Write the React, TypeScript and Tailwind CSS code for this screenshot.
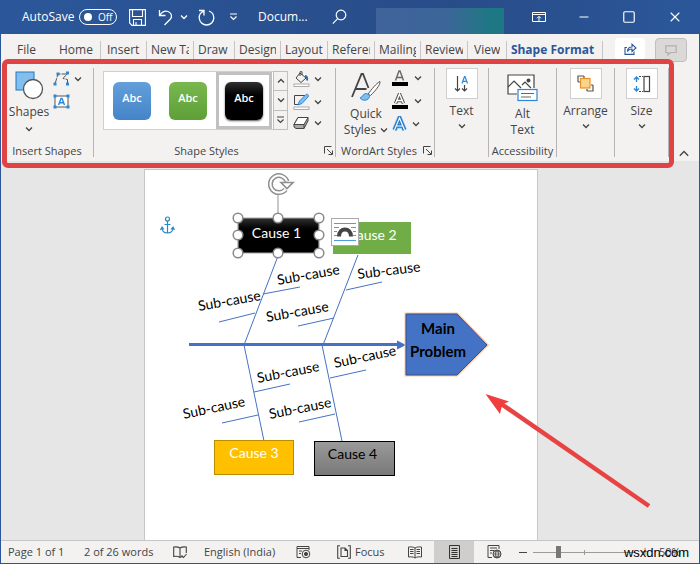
import type { ReactNode } from 'react'
import { Minus, Square, X } from 'lucide-react'

const tabs = [
  { label: 'File', className: 'w-[54px] pl-4' },
  { label: 'Home', className: 'w-[46px] px-1 border-r' },
  { label: 'Insert', className: 'w-[46px] px-1.5 border-r' },
  { label: 'New Tab', className: 'w-[47px] px-1 border-r' },
  { label: 'Draw', className: 'w-[41px] px-1 border-r' },
  { label: 'Design', className: 'w-[46px] px-1 border-r' },
  { label: 'Layout', className: 'w-[47px] px-1 border-r' },
  { label: 'References', className: 'w-[47px] px-1 border-r' },
  { label: 'Mailings', className: 'w-[46px] px-1 border-r' },
  { label: 'Review', className: 'w-[47px] px-1 border-r' },
  { label: 'View', className: 'w-[39px] px-1.5 border-r' },
]

const presets = [
  { name: 'Blue', selected: false, className: 'from-[#629fdb] to-[#4584c7]' },
  { name: 'Green', selected: false, className: 'from-[#78b84f] to-[#5f9f37]' },
  { name: 'Black', selected: true, className: 'from-[#333333] via-black to-black shadow-[0_1px_2px_#555]' },
]

// bones of the fishbone: [x1, y1, x2, y2]
const bones = [
  [133, 86, 99, 175],
  [213, 85, 178, 175],
  [99, 175, 119, 271],
  [177, 175, 197, 271],
]

const twigs = [
  [118, 124, 155, 117],
  [74, 152, 110, 143],
  [153, 156, 189, 148],
  [201, 120, 237, 112],
  [185, 208, 221, 200],
  [109, 222, 145, 214],
  [77, 253, 113, 245],
  [154, 252, 190, 244],
]

const subCauses = [
  { x: 133, y: 115, angle: -10 },
  { x: 54, y: 141, angle: -10 },
  { x: 122, y: 152, angle: -10 },
  { x: 213, y: 109, angle: -7 },
  { x: 190, y: 198, angle: -12 },
  { x: 113, y: 213, angle: -11 },
  { x: 39, y: 249, angle: -12 },
  { x: 125, y: 249, angle: -11 },
]

function Caret({ up = false }: { up?: boolean }) {
  return (
    <svg width="8" height="6" viewBox="0 0 8 6" fill="none" stroke="currentColor" strokeWidth="1.3" className="shrink-0">
      <path d={up ? 'M1 4.5 4 1.5 7 4.5' : 'M1 1.5 4 4.5 7 1.5'} />
    </svg>
  )
}

function Launcher({ label }: { label: string }) {
  return (
    <button aria-label={label} className="absolute right-0.5 bottom-0.5">
      <svg width="9" height="9" viewBox="0 0 9 9" fill="none" stroke="#444" strokeWidth="1">
        <path d="M.5 7.5V.5H7.5M3 3 8 8M8.5 4.5V8.5H4.5" />
      </svg>
    </button>
  )
}

function Group({ title, className, launcher, children }: { title?: string; className: string; launcher?: boolean; children: ReactNode }) {
  return (
    <section aria-label={title} className={`relative flex h-[89px] shrink-0 flex-col justify-between border-r border-[#b5b5b5] ${className}`}>
      {children}
      {title && <div className="h-3 text-center text-[11px] leading-[12px] whitespace-nowrap">{title}</div>}
      {launcher && <Launcher label={`${title} options`} />}
    </section>
  )
}

function BoxedButton({ label, children }: { label: string; children: ReactNode }) {
  return (
    <button className="flex flex-col items-center">
      <span className="flex h-[31px] w-8 items-center justify-center border border-[#cfcfcf] bg-white">{children}</span>
      <span className="mt-1 mb-1 text-xs leading-4">{label}</span>
      <Caret />
    </button>
  )
}

function TitleBar() {
  return (
    <header className="flex h-[34px] items-center bg-linear-to-r from-[#2b579a] via-[#284c88] via-65% to-[#2b579a] pl-[21px] text-white">
      <span className="w-[57px] text-xs whitespace-nowrap">AutoSave</span>
      <button role="switch" aria-checked="false" aria-label="AutoSave" className="flex h-4 w-[38px] items-center gap-1.5 rounded-full border border-white pl-1 text-[10px] leading-none">
        <span className="size-2 rounded-full bg-white" />
        Off
      </button>
      <button aria-label="Save" className="ml-3">
        <svg width="17" height="17" viewBox="0 0 17 17" fill="none" stroke="white" strokeWidth="1.1">
          <path d="M.6.6H16.4V16.4H3L.6 14Z M3.5.6V7.5H13.5V.6 M4.5 16V10.5H12.5V16 M7 16V13" />
        </svg>
      </button>
      <button aria-label="Undo" className="ml-3 flex items-center gap-1.5">
        <svg width="16" height="18" viewBox="0 0 16 18" fill="none" stroke="white" strokeWidth="1.3">
          <path d="M1.5 2V7.5H7.5 M1.8 7.2C4 4 7 2.5 10 3.5C14 5 14.5 9 12 11.5L6.5 17" />
        </svg>
        <Caret />
      </button>
      <button aria-label="Redo" className="ml-2.5">
        <svg width="17" height="17" viewBox="0 0 17 17" fill="none" stroke="white" strokeWidth="1.3">
          <path d="M1 1.5H6V6.5 M6 2C2.5 3.5 1 6 1.2 9C1.6 13 4.7 16 8.5 16C12.5 16 15.8 13 15.8 9C15.8 6 14 3 11 2" />
        </svg>
      </button>
      <button aria-label="Customize Quick Access Toolbar" className="ml-3.5">
        <svg width="9" height="8" viewBox="0 0 9 8" fill="none" stroke="white" strokeWidth="1.2">
          <path d="M1 1H8M1.5 3.5 4.5 6.5 7.5 3.5" />
        </svg>
      </button>
      <span className="ml-5 w-[74px] text-xs">Docum...</span>
      <button aria-label="Search">
        <svg width="15" height="16" viewBox="0 0 15 16" fill="none" stroke="white" strokeWidth="1.2">
          <circle cx="9" cy="6" r="4.8" />
          <path d="M5.6 9.6.8 14.6" />
        </svg>
      </button>
      <div className="ml-[29px] h-[26px] w-32 self-end bg-linear-to-r from-[#40639c] via-[#3b6699] via-55% to-[#1d7784] to-88%" />
      <div className="flex flex-1 items-center justify-between pr-4 pl-7">
        <button aria-label="Ribbon Display Options">
          <svg width="14" height="12" viewBox="0 0 14 12" fill="none" stroke="white">
            <path d="M.5 1.5H13.5V10.5H.5Z M.5 3.5H13.5 M7 10V5.5M5 7.3 7 5.3 9 7.3" />
          </svg>
        </button>
        <button aria-label="Minimize"><Minus className="size-3.5" strokeWidth={1.8} /></button>
        <button aria-label="Maximize"><Square className="size-3.5" strokeWidth={2} /></button>
        <button aria-label="Close"><X className="size-4" strokeWidth={1.6} /></button>
      </div>
    </header>
  )
}

function TabBar() {
  return (
    <nav className="flex h-7 bg-[#f3f2f1] text-xs text-[#444]">
      <div className="flex pt-[7px]">
        {tabs.map((tab) => (
          <button key={tab.label} className={`h-[18px] shrink-0 border-[#c8c6c4] text-left leading-[18px] ${tab.className}`}>
            <span className="block overflow-hidden whitespace-nowrap">{tab.label}</span>
          </button>
        ))}
        <button className="h-[18px] w-24 shrink-0 border-r border-[#c8c6c4] pr-1 font-bold leading-[18px] whitespace-nowrap text-[#2b579a]">
          Shape Format
        </button>
      </div>
      <div className="flex flex-1 items-start justify-end gap-2.5 pt-1 pr-3">
        <button aria-label="Share" className="flex h-[22px] w-[30px] items-center justify-center rounded-sm bg-white">
          <svg width="13" height="12" viewBox="0 0 13 12" fill="none" stroke="#2b579a" strokeWidth="1.1">
            <path d="M3 4.5H1V11.4H10V8.5 M3.5 8.5C3.5 5.5 5 4 8 4V1.2L12 5 8 8.5V6C6 6 4.5 6.5 3.5 8.5Z" />
          </svg>
        </button>
        <button aria-label="Comments" className="flex h-6 w-8 items-center justify-center rounded-sm border border-[#c0bfbe] bg-[#dad9d8]">
          <svg width="12" height="11" viewBox="0 0 12 11" fill="none" stroke="#b3b0ad" strokeWidth="1.2">
            <path d="M.8.8H11.2V7.5H5.5L3 10V7.5H.8Z" />
          </svg>
        </button>
      </div>
    </nav>
  )
}

function InsertShapes() {
  return (
    <Group title="Insert Shapes" className="w-[93px]">
      <div className="flex items-start gap-1 pt-0.5 pl-2">
        <button className="flex w-10 flex-col items-center">
          <svg width="30" height="30" viewBox="0 0 30 30">
            <rect x="2" y="2" width="18" height="18" fill="#83beec" stroke="#2478bf" />
            <circle cx="19" cy="19" r="9.5" fill="white" stroke="#555" strokeWidth="1.3" />
          </svg>
          <span className="mt-1 mb-1.5 text-xs leading-4">Shapes</span>
          <Caret />
        </button>
        <div className="flex flex-col items-start gap-2 pt-px">
          <button aria-label="Edit Shape" className="flex items-center gap-1">
            <svg width="17" height="15" viewBox="0 0 17 15" fill="none">
              <path d="M2 13 5 3H14L10 7.5 14.500 8.500V13" stroke="#555" strokeDasharray="6 1" />
              <path d="M3.500 1.500H6.500V4.500H3.500ZM13 .5H16V3.500H13ZM.5 11.500H3.500V14.500H.5ZM13 11.500H16V14.500H13Z" fill="#2b88d8" />
            </svg>
            <Caret />
          </button>
          <button aria-label="Draw Text Box">
            <svg width="17" height="15" viewBox="0 0 17 15" fill="none">
              <rect x="2" y="2" width="13" height="11" fill="white" stroke="#555" />
              <path d="M5.5 11 8 4.5H9L11.5 11M6.5 8.8H10.5" stroke="#2b88d8" strokeWidth="1.4" />
              <path d="M.5.5H3.5V3.5H.5ZM13.5.5H16.5V3.5H13.5ZM.5 11.5H3.5V14.5H.5ZM13.5 11.5H16.5V14.5H13.5Z" fill="#2b88d8" />
            </svg>
          </button>
        </div>
      </div>
    </Group>
  )
}

function ShapeStyles() {
  return (
    <Group title="Shape Styles" launcher className="w-[242px] [&>div:nth-child(2)]:-ml-4">
      <div className="flex pt-[3px] pl-[9px]">
        <div className="flex h-[59px] w-[170px] items-center border border-r-0 border-[#d2d0ce] bg-white">
          {presets.map((preset) => (
            <button
              key={preset.name}
              aria-label={preset.name}
              aria-pressed={preset.selected}
              className={`flex h-[57px] w-14 shrink-0 items-center justify-center ${preset.selected ? 'border-[3px] border-[#c1c1c1]' : ''}`}
            >
              <span className={`flex size-[38px] items-center justify-center rounded-md bg-linear-to-b pb-1 text-[11px] font-semibold text-white ${preset.className}`}>
                Abc
              </span>
            </button>
          ))}
        </div>
        <div className="flex w-[15px] flex-col border border-[#c0bfbe] text-[#444] [&>button]:flex [&>button]:flex-1 [&>button]:items-center [&>button]:justify-center">
          <button aria-label="Previous row" className="border-b border-[#c0bfbe]"><Caret up /></button>
          <button aria-label="Next row" className="border-b border-[#c0bfbe]"><Caret /></button>
          <button aria-label="More styles">
            <svg width="9" height="8" viewBox="0 0 9 8" fill="none" stroke="#444" strokeWidth="1.2">
              <path d="M1 1H8M1.5 3.5 4.5 6.5 7.5 3.5" />
            </svg>
          </button>
        </div>
        <div className="flex flex-col justify-between pl-[5px]">
          <button aria-label="Shape Fill" className="flex items-center gap-1">
            <svg width="17" height="16" viewBox="0 0 17 16" fill="none" stroke="#444">
              <path d="M7 2 13 7 8 11.5 3 7ZM7 5V1C7 0 9 0 9 1V4" />
              <path d="M12 5C14 5 14.5 7 14 9.5" stroke="#2b6cb8" strokeWidth="2" />
              <rect x="1" y="13" width="15" height="2.5" fill="white" stroke="#999" strokeWidth=".8" />
            </svg>
            <Caret />
          </button>
          <button aria-label="Shape Outline" className="flex items-center gap-1">
            <svg width="17" height="17" viewBox="0 0 17 17" fill="none" stroke="#444">
              <path d="M12 2.5H1.5V11.5H6" />
              <path d="M5 12 6.5 8 13 1.5C14 .5 16.5 2 15 4L9 10.5Z" fill="#83beec" stroke="#2b88d8" />
              <rect x="1" y="14" width="15" height="2.5" fill="white" stroke="#999" strokeWidth=".8" />
            </svg>
            <Caret />
          </button>
          <button aria-label="Shape Effects" className="flex items-center gap-1">
            <svg width="17" height="14" viewBox="0 0 17 14" fill="none" stroke="#444">
              <path d="M1 8.5 5 1.5H15V5L11 12.5H3L1 11Z" fill="#aaa" />
              <path d="M1 8.5 5 1.5H15L11 8.5Z" fill="white" />
              <path d="M11 8.5V12.5" />
            </svg>
            <Caret />
          </button>
        </div>
      </div>
    </Group>
  )
}

function WordArtStyles() {
  return (
    <Group title="WordArt Styles" launcher className="w-[99px] [&>div:nth-child(2)]:-ml-3">
      <div className="flex pt-0.5 pl-2">
        <button className="flex w-11 flex-col items-center">
          <svg width="32" height="32" viewBox="0 0 32 32" fill="none">
            <path d="M2 27 11.5 4H13L18.5 18M5.5 19H16.5" stroke="#444" strokeWidth="1.8" />
            <path d="M18 24C22 19 26 13.5 30 11.5C30.5 15 25 21 20.5 25.5Z" fill="white" stroke="#555" />
            <path d="M10 28C13 27 12 24.5 15.5 23.5C19 23.5 21 27 18 29C15.5 31 12 30.5 10 28Z" fill="#83beec" stroke="#2b88d8" />
          </svg>
          <span className="mt-1 text-xs leading-4">Quick</span>
          <span className="flex items-center gap-1 text-xs leading-4">Styles <Caret /></span>
        </button>
        <div className="flex h-[62px] flex-col justify-between pl-[3px]">
          <button aria-label="Text Fill" className="flex items-center gap-1.5">
            <svg width="17" height="16" viewBox="0 0 17 16" fill="none">
              <path d="M4.5 10.5 8 1H9L12.5 10.5M5.8 7.5H11.2" stroke="#666" strokeWidth="1.4" />
              <rect x="1" y="12" width="16" height="4" fill="black" />
            </svg>
            <Caret />
          </button>
          <button aria-label="Text Outline" className="flex items-center gap-1.5">
            <svg width="17" height="16" viewBox="0 0 17 16" fill="none">
              <path d="M4.5 10.5 8.5 1 12.5 10.5M6 7.5H11" stroke="#555" strokeWidth="3.4" />
              <path d="M4.5 10.5 8.5 1 12.5 10.5M6 7.5H11" stroke="white" strokeWidth="1.4" />
              <rect x="1" y="12" width="16" height="4" fill="black" />
            </svg>
            <Caret />
          </button>
          <button aria-label="Text Effects" className="flex items-center gap-1">
            <svg width="17" height="16" viewBox="0 0 17 16" fill="none">
              <path d="M3.5 14 8.5 2 13.5 14M5.5 10H11.5" stroke="#8cc4f0" strokeWidth="5" />
              <path d="M3.5 14 8.5 2 13.5 14M5.5 10H11.5" stroke="#1f78c8" strokeWidth="3.6" />
              <path d="M3.5 14 8.5 2 13.5 14M5.5 10H11.5" stroke="white" strokeWidth="1.2" />
            </svg>
            <Caret />
          </button>
        </div>
      </div>
    </Group>
  )
}

function Ribbon() {
  return (
    <div className="relative flex h-[99px] bg-[#f3f2f1] pt-1.5 text-[#444]">
      <InsertShapes />
      <ShapeStyles />
      <WordArtStyles />
      <Group className="w-[54px]">
        <BoxedButton label="Text">
          <svg width="16" height="18" viewBox="0 0 16 18" fill="none" stroke="#444" strokeWidth="1.2">
            <path d="M3.5 1V16M1 13.5 3.5 16 6 13.5M10.5 10V16M8 13.5 10.5 16 13 13.5" />
            <path d="M8 8.5 10.5 1.5H11L13.5 8.5M9 6.3H12.5" stroke="#2b88d8" />
          </svg>
        </BoxedButton>
      </Group>
      <Group title="Accessibility" className="w-[68px]">
        <button className="flex flex-col items-center pt-[5px]">
          <svg width="31" height="29" viewBox="0 0 31 29" fill="none" stroke="#444" strokeWidth="1.2">
            <path d="M10 21H1V2H27V15" fill="white" />
            <path d="M1 14 7 8 14 15M15 12 18 9 24 15" />
            <circle cx="21.5" cy="7.5" r="1.4" fill="#444" />
            <rect x="11" y="16.5" width="19" height="11" fill="white" stroke="#2b88d8" />
            <path d="M14 20.5H27M14 24H24" stroke="#666" />
          </svg>
          <span className="mt-1 text-xs leading-4">Alt</span>
          <span className="text-xs leading-4">Text</span>
        </button>
      </Group>
      <Group className="w-[58px]">
        <BoxedButton label="Arrange">
          <svg width="17" height="17" viewBox="0 0 17 17" fill="none" stroke="#555" strokeWidth="1.2">
            <path d="M1 7V1H7M16 10V16H10" />
            <path d="M1 7H3M7 1V3M16 10H14M10 16V14" />
            <rect x="3.5" y="3.5" width="9.5" height="9.5" fill="#fbd38b" stroke="#e8912d" />
          </svg>
        </BoxedButton>
      </Group>
      <Group className="w-[54px]">
        <BoxedButton label="Size">
          <svg width="18" height="18" viewBox="0 0 18 18" fill="none" stroke="#444" strokeWidth="1.2">
            <rect x="11" y="1.5" width="5.5" height="15" />
            <path d="M6 1.5H10M6 16.5H10" strokeDasharray="2 1" />
            <path d="M3.5 2V7M1 4.5 3.5 2 6 4.5M3.5 16V11M1 13.5 3.5 16 6 13.5" stroke="#2b88d8" strokeWidth="1.4" />
          </svg>
        </BoxedButton>
      </Group>
      <div className="flex flex-1 items-end justify-center pb-1">
        <button aria-label="Collapse the Ribbon">
          <svg width="10" height="7" viewBox="0 0 10 7" fill="none" stroke="#444" strokeWidth="1.3">
            <path d="M.8 5.8 5 1.5 9.2 5.8" />
          </svg>
        </button>
      </div>
      {/* highlight around the Shape Format groups */}
      <div className="pointer-events-none absolute -top-[3px] right-[25px] -bottom-[7px] left-px rounded-md border-[5px] border-[#e04343]" />
    </div>
  )
}

function Diagram() {
  return (
    <>
      <svg viewBox="0 0 393 372" className="absolute top-0 left-0 h-[372px] w-[393px] font-[Lato,sans-serif]">
        <g stroke="#4472c4" strokeWidth="1">
          {[...bones, ...twigs].map(([x1, y1, x2, y2]) => (
            <line key={`${x1}-${y1}-${x2}`} x1={x1} y1={y1} x2={x2} y2={y2} />
          ))}
        </g>
        <path d="M44 174.5H254" stroke="#4472c4" strokeWidth="3" />
        <path d="M252 170.5 261 175 252 179.5Z" fill="#4472c4" />
        <path d="M261 144H312L342 175 312 205H261Z" fill="#4472c4" stroke="#f4c7ab" strokeWidth="3" />
        <path d="M261 144H312L342 175 312 205H261Z" fill="#4472c4" stroke="#34508a" />
        {subCauses.map((s) => (
          <text key={`${s.x}-${s.y}`} x={s.x} y={s.y} fontSize="14" transform={`rotate(${s.angle} ${s.x} ${s.y})`}>
            Sub-cause
          </text>
        ))}
        <text x="293" y="164" fontSize="15" fontWeight="700" textAnchor="middle">Main</text>
        <text x="293" y="187" fontSize="15" fontWeight="700" textAnchor="middle">Problem</text>
        <g fill="none" stroke="#2b88c8" strokeWidth="1.2">
          <circle cx="22.5" cy="49" r="2" />
          <path d="M22.5 51V63M19.5 54.5H25.5M17 57.5C17 61 19 63 22.5 63C26 63 28 61 28 57.5M15.5 60 17 57 19 59.5M29.5 60 28 57 26 59.5" />
        </g>
      </svg>

      <div className="absolute top-[52px] left-[188px] h-8 w-[78px] bg-[#70ad47] text-center font-[Lato,sans-serif] text-sm leading-[26px] text-white">Cause 2</div>
      <div className="absolute top-[270px] left-[69px] h-[35px] w-20 border border-[#bc8c00] bg-[#ffc000] text-center font-[Lato,sans-serif] text-sm leading-[24px] text-white">Cause 3</div>
      <div className="absolute top-[271px] left-[169px] h-[35px] w-[81px] border border-black bg-linear-to-b from-[#9a9a9a] to-[#797979] pr-1 text-center font-[Lato,sans-serif] text-sm leading-[24px] text-black">Cause 4</div>
      <div className="absolute top-12 left-[93px] h-[35px] w-[81px] bg-linear-to-b from-[#333] via-black via-45% to-black pr-1 text-center font-[Lato,sans-serif] text-sm leading-[30px] text-white">Cause 1</div>

      {/* selection frame with its handles */}
      <svg viewBox="0 0 100 100" className="absolute top-0 left-[84px] size-[100px]" fill="none">
        <path d="M9 48H90V83H9ZM49 24V48" stroke="#a6a6a6" strokeWidth="1.2" />
        {[[9, 48], [49, 48], [90, 48], [9, 65], [90, 65], [9, 83], [49, 83], [90, 83]].map(([cx, cy]) => (
          <circle key={`${cx}-${cy}`} cx={cx} cy={cy} r="4.8" fill="white" stroke="#8a8a8a" strokeWidth="1.5" />
        ))}
        <path d="M56.500 19.500A8.500 8.500 0 1 1 58 11.500" stroke="#8f8f8f" strokeWidth="5" />
        <path d="M56.500 19.500A8.500 8.500 0 1 1 58 11.500" stroke="white" strokeWidth="2" />
        <path d="M52 12.500H64L58 18.500Z" fill="white" stroke="#8f8f8f" strokeWidth="1.6" />
      </svg>

      <button aria-label="Layout Options" className="absolute top-12 left-[186px] flex size-7 items-center justify-center border border-[#ababab] bg-white">
        <svg width="24" height="22" viewBox="0 0 24 22" fill="none" stroke="#4a9fdc">
          <path d="M1 2.5H23M1 19.5H23M1 6.5H6M18 6.5H23M1 10.5H4M20 10.5H23M1 14.5H4M20 14.5H23" />
          <path d="M6 15.5C6 6 18 6 18 15.5" stroke="#444" strokeWidth="4" />
        </svg>
      </button>

      {/* pointer to the main problem */}
      <svg viewBox="0 0 170 120" className="pointer-events-none absolute top-[221px] left-[338px] h-[120px] w-[170px]">
        <path d="M17 12 166 115" stroke="#e84343" strokeWidth="4.5" />
        <path d="M2.5 3 26 10.5 20.5 13 18.5 16.5 17 23Z" fill="#f23d3d" />
      </svg>
    </>
  )
}

function StatusBar() {
  return (
    <footer className="relative flex h-[23px] items-stretch border-t border-[#c6c6c6] bg-[#f3f2f1] text-[11px] whitespace-nowrap text-[#444]">
      <div className="flex w-[76px] items-center pl-[7px]">Page 1 of 1</div>
      <div className="flex w-24 items-center pl-[7px]">2 of 26 words</div>
      <button aria-label="Proofing" className="w-[31px]">
        <svg width="14" height="13" viewBox="0 0 14 13" fill="none" stroke="#444" strokeWidth="1.1">
          <path d="M7 2V11M7 2C5 .7 3 .7 .7 1V10.5C3 10 5 10.2 7 11.5M7 2C9 .7 11 .7 13.3 1V7M7 11.5 9 10.5M8.5 9.5 10.5 11.5 13.5 8" />
        </svg>
      </button>
      <div className="flex w-[92px] items-center">English (India)</div>
      <button aria-label="Record Macro" className="w-[41px]">
        <svg width="15" height="14" viewBox="0 0 15 14" fill="none" stroke="#444">
          <path d="M5 12.5H1V1.5H13V5M1 3.5H13M3 6H6M3 8.5H5" />
          <circle cx="10" cy="9" r="3.8" />
          <circle cx="10" cy="9" r="1.6" fill="#444" />
        </svg>
      </button>
      <button className="flex w-[71px] items-center gap-1">
        <svg width="14" height="14" viewBox="0 0 14 14" fill="none" stroke="#444" strokeWidth="1.1">
          <path d="M3 .7H.7V13.3H3M11 .7H13.3V13.3H11M4 3H8L10.5 5.5V11.5H4ZM8 3V5.5H10.5" />
        </svg>
        Focus
      </button>
      <button aria-label="Read Mode" className="w-[26px]">
        <svg width="14" height="13" viewBox="0 0 14 13" fill="none" stroke="#444">
          <path d="M7 2C5 .8 3 .8.5 1V11C3 10.7 5 10.7 7 12C9 10.7 11 10.7 13.5 11V1C11 .8 9 .8 7 2ZV12M2 3.5H5.5M2 5.5H5.5M2 7.5H5.5M8.5 3.5H12M8.5 5.5H12M8.5 7.5H12" />
        </svg>
      </button>
      <button aria-label="Print Layout" aria-pressed="true" className="flex w-10 items-center justify-center bg-[#cfcecd]">
        <svg width="11" height="14" viewBox="0 0 11 14" fill="none" stroke="#333">
          <path d="M.5.5H10.5V13.5H.5ZM2.5 3.5H8.5M2.5 5.5H8.5M2.5 7.5H8.5M2.5 9.5H8.5M2.5 11.5H8.5" />
        </svg>
      </button>
      <button aria-label="Web Layout" className="ml-[13px] w-8">
        <svg width="15" height="14" viewBox="0 0 15 14" fill="none" stroke="#444">
          <path d="M5 12.5H1V.5H12V4M3 3H10M3 5.5H7M3 8H5" />
          <circle cx="10" cy="9" r="4" />
          <path d="M6 9H14M10 5C8 7 8 11 10 13C12 11 12 7 10 5M7 6.8H13M7 11.2H13" strokeWidth=".8" />
        </svg>
      </button>
      <div className="flex min-w-0 flex-1 items-center gap-1.5">
        <button aria-label="Zoom Out" className="h-px w-2 bg-[#444]" />
        <div className="relative flex items-center">
          <input
            type="range"
            aria-label="Zoom"
            min={10}
            max={180}
            defaultValue={50}
            className="h-3 w-[102px] appearance-none bg-[linear-gradient(#9b9b9b,#9b9b9b)] bg-[length:100%_1px] bg-center bg-no-repeat [&::-webkit-slider-thumb]:h-3 [&::-webkit-slider-thumb]:w-[5px] [&::-webkit-slider-thumb]:appearance-none [&::-webkit-slider-thumb]:bg-[#777]"
          />
          <span className="pointer-events-none absolute left-1/2 h-[5px] w-px bg-[#9b9b9b]" />
        </div>
        <button aria-label="Zoom In" className="text-sm leading-none font-light">+</button>
        <span className="ml-1">50%</span>
      </div>
      <span className="pointer-events-none absolute top-0.5 right-2.5 font-['Liberation_Sans',sans-serif] text-[13px] leading-5 text-black">wsxdn.com</span>
    </footer>
  )
}

export default function App() {
  return (
    <div className="flex min-h-screen flex-col border-x border-b border-[#2b579a] bg-[#e6e6e6] font-['Open_Sans','Noto_Sans',sans-serif]">
      <TitleBar />
      <TabBar />
      <Ribbon />
      <main className="flex flex-1 justify-center pt-2 pr-[18px]">
        <div className="relative min-h-[371px] w-[394px] shrink-0 border-x border-t border-[#c6c6c6] bg-white">
          <Diagram />
        </div>
      </main>
      <StatusBar />
    </div>
  )
}
